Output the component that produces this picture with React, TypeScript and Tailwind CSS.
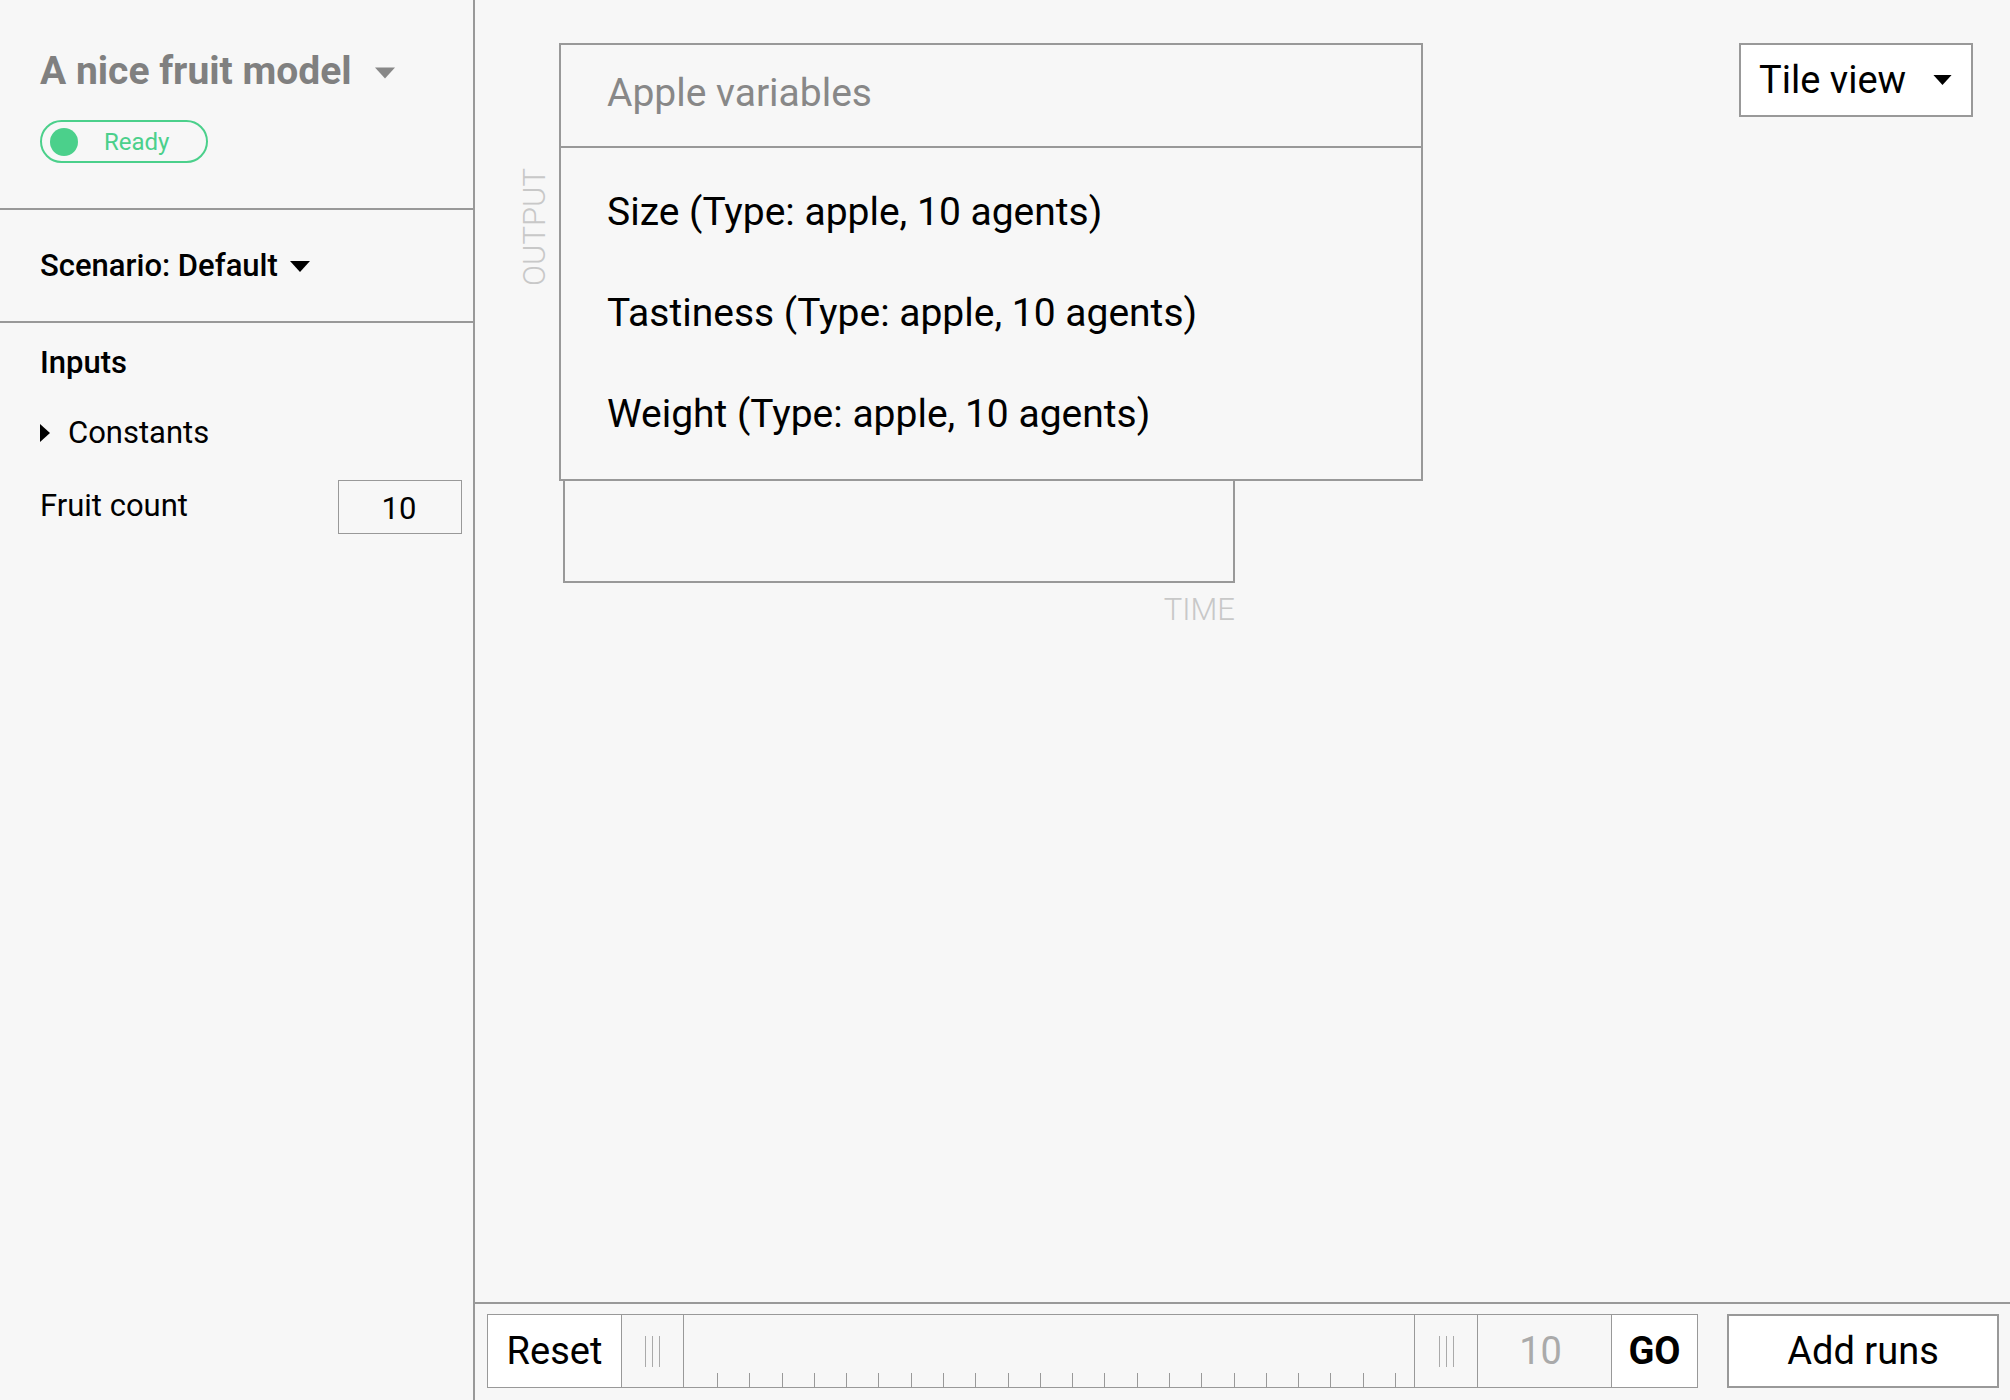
import React from 'react';

function Caret({ className }: { className?: string }) {
  return (
    <svg viewBox="0 0 20 11" className={className} fill="currentColor">
      <polygon points="0,0 20,0 10,11" />
    </svg>
  );
}

function Grip() {
  return (
    <div className="flex items-center justify-center gap-[6px]">
      <div className="w-px h-[31px] bg-[#aaa]" />
      <div className="w-px h-[31px] bg-[#aaa]" />
      <div className="w-px h-[31px] bg-[#aaa]" />
    </div>
  );
}

function Sidebar() {
  return (
    <aside className="w-[475px] shrink-0 h-full border-r-2 border-[#999] flex flex-col">
      <div className="pt-[48px] pl-[40px] pb-[45px] border-b-2 border-[#999]">
        <div className="flex items-center">
          <h1 className="text-[39px] leading-[46px] font-bold text-[#808080]">A nice fruit model</h1>
          <Caret className="w-[20px] h-[12px] ml-[23px] mt-[4px] text-[#888]" />
        </div>
        <div className="mt-[26px] w-[168px] h-[43px] rounded-full border-2 border-[#4bd08b] flex items-center pl-[8px]">
          <div className="w-[28px] h-[28px] rounded-full bg-[#4bd08b]" />
          <span className="ml-[26px] text-[24px] leading-none text-[#4bd08b]">Ready</span>
        </div>
      </div>

      <div className="h-[113px] pl-[40px] flex items-center border-b-2 border-[#999]">
        <span className="text-[31px] leading-[36px] font-medium text-black">Scenario: Default</span>
        <Caret className="w-[20px] h-[11px] ml-[12px] mt-[2px] text-black" />
      </div>

      <div className="pt-[23px] pl-[40px] pr-[11px]">
        <h2 className="text-[31px] leading-[34px] font-medium text-black">Inputs</h2>
        <div className="mt-[35px] flex items-center">
          <svg viewBox="0 0 10 18" className="w-[10px] h-[18px]" fill="black">
            <polygon points="0,0 10,9 0,18" />
          </svg>
          <span className="ml-[18px] text-[31px] leading-[36px] text-black">Constants</span>
        </div>
        <div className="mt-[29px] flex items-center justify-between">
          <span className="text-[31px] leading-[36px] text-black -mt-[3px]">Fruit count</span>
          <div className="w-[124px] h-[54px] border border-[#999] flex items-center justify-center text-[31px] text-black pt-[4px] pr-[2px]">
            10
          </div>
        </div>
      </div>
    </aside>
  );
}

function ChartTile() {
  return (
    <div className="flex pl-[44px]">
      <div className="w-[31px] mt-[125px]">
        <span className="block [writing-mode:vertical-rl] rotate-180 text-[31px] leading-[31px] font-light text-[#c8c8c8]">
          OUTPUT
        </span>
      </div>
      <div className="ml-[13px] flex flex-col items-end">
        <div className="w-[672px] h-[540px] border-2 border-[#999]" />
        <span className="mt-[9px] text-[31px] leading-[36px] font-light text-[#c8c8c8]">TIME</span>
      </div>
    </div>
  );
}

function VariableMenu() {
  const items = [
    'Size (Type: apple, 10 agents)',
    'Tastiness (Type: apple, 10 agents)',
    'Weight (Type: apple, 10 agents)',
  ];
  return (
    <div className="absolute top-[43px] left-[84px] w-[864px] h-[438px] border-2 border-[#999] bg-[#f7f7f7]">
      <div className="h-[103px] pt-[25px] pl-[46px] border-b-2 border-[#999] text-[39px] leading-[46px] text-[#888]">
        Apple variables
      </div>
      <div className="pt-[14px]">
        {items.map((item) => (
          <div key={item} className="h-[101px] pl-[46px] flex items-center text-[39px] text-black">
            {item}
          </div>
        ))}
      </div>
    </div>
  );
}

function BottomBar() {
  const ticks = Array.from({ length: 22 });
  return (
    <div className="shrink-0 border-t-2 border-[#999] pt-[10px] pb-[12px] pl-[12px] pr-[11px] flex items-center">
      <div className="flex h-[74px] w-[1211px] border border-[#999]">
        <button className="w-[133px] bg-white text-[38px] text-black">Reset</button>
        <div className="w-[62px] border-l border-[#999] flex items-center justify-center">
          <Grip />
        </div>
        <div className="flex-1 border-l border-[#999] flex items-end justify-between pl-[33px] pr-[18px]">
          {ticks.map((_, i) => (
            <div key={i} className="w-px h-[14px] bg-[#999]" />
          ))}
        </div>
        <div className="w-[63px] border-l border-[#999] flex items-center justify-center">
          <Grip />
        </div>
        <div className="w-[134px] border-l border-[#999] flex items-center justify-center pr-[8px] text-[38px] text-[#aaa]">
          10
        </div>
        <button className="w-[86px] border-l border-[#999] bg-white text-[38px] font-bold text-black">GO</button>
      </div>
      <button className="ml-[29px] w-[272px] h-[74px] border-2 border-[#999] bg-white text-[38px] text-black">
        Add runs
      </button>
    </div>
  );
}

export default function App() {
  return (
    <div className="w-full h-screen flex bg-[#f7f7f7] font-['Roboto',sans-serif] overflow-hidden">
      <Sidebar />
      <main className="flex-1 flex flex-col min-w-0">
        <div className="flex-1 relative">
          <div className="flex items-start justify-between pt-[43px] pr-[37px]">
            <ChartTile />
            <button className="w-[234px] h-[74px] border-2 border-[#999] bg-white flex items-center justify-between pl-[18px] pr-[19px] text-[38px] text-black">
              <span>Tile view</span>
              <Caret className="w-[19px] h-[10px] text-black" />
            </button>
          </div>
          <VariableMenu />
        </div>
        <BottomBar />
      </main>
    </div>
  );
}
